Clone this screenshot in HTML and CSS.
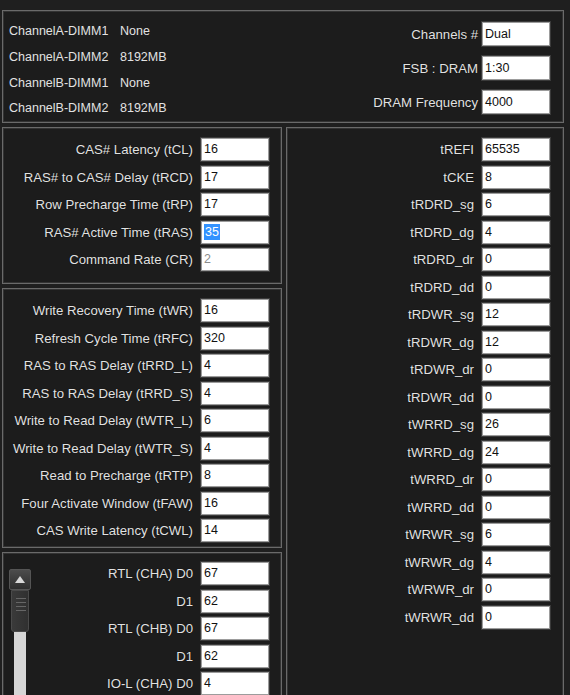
FILE: index.html
```html
<!DOCTYPE html>
<html lang="en">
<head>
  <meta charset="UTF-8">
  <title>Memory Timings</title>
  <link rel="stylesheet" href="styles.css">
</head>
<body>

<div class="app">

  <section class="panel top">
    <div class="dimms">
      <span>ChannelA-DIMM1</span><span>None</span>
      <span>ChannelA-DIMM2</span><span>8192MB</span>
      <span>ChannelB-DIMM1</span><span>None</span>
      <span>ChannelB-DIMM2</span><span>8192MB</span>
    </div>
    <div class="summary">
      <div class="field"><span>Channels #</span><span class="box big">Dual</span></div>
      <div class="field"><span>FSB : DRAM</span><span class="box big">1:30</span></div>
      <div class="field"><span>DRAM Frequency</span><span class="box big">4000</span></div>
    </div>
  </section>

  <div class="columns">
    <div class="left">

      <section class="panel primary">
        <div class="field"><span>CAS# Latency (tCL)</span><span class="box">16</span></div>
        <div class="field"><span>RAS# to CAS# Delay (tRCD)</span><span class="box">17</span></div>
        <div class="field"><span>Row Precharge Time (tRP)</span><span class="box">17</span></div>
        <div class="field"><span>RAS# Active Time (tRAS)</span><span class="box"><span class="sel">35</span></span></div>
        <div class="field"><span>Command Rate (CR)</span><span class="box off">2</span></div>
      </section>

      <section class="panel secondary">
        <div class="field"><span>Write Recovery Time (tWR)</span><span class="box">16</span></div>
        <div class="field"><span>Refresh Cycle Time (tRFC)</span><span class="box">320</span></div>
        <div class="field"><span>RAS to RAS Delay (tRRD_L)</span><span class="box">4</span></div>
        <div class="field"><span>RAS to RAS Delay (tRRD_S)</span><span class="box">4</span></div>
        <div class="field"><span>Write to Read Delay (tWTR_L)</span><span class="box">6</span></div>
        <div class="field"><span>Write to Read Delay (tWTR_S)</span><span class="box">4</span></div>
        <div class="field"><span>Read to Precharge (tRTP)</span><span class="box">8</span></div>
        <div class="field"><span>Four Activate Window (tFAW)</span><span class="box">16</span></div>
        <div class="field"><span>CAS Write Latency (tCWL)</span><span class="box">14</span></div>
      </section>

      <section class="panel rtl">
        <div class="scroll">
          <div class="arrow"></div>
          <div class="thumb"></div>
          <div class="track"></div>
        </div>
        <div class="rows">
          <div class="field"><span>RTL (CHA) D0</span><span class="box">67</span></div>
          <div class="field"><span>D1</span><span class="box">62</span></div>
          <div class="field"><span>RTL (CHB) D0</span><span class="box">67</span></div>
          <div class="field"><span>D1</span><span class="box">62</span></div>
          <div class="field"><span>IO-L (CHA) D0</span><span class="box">4</span></div>
        </div>
      </section>

    </div>

    <section class="panel sub">
      <div class="field"><span>tREFI</span><span class="box">65535</span></div>
      <div class="field"><span>tCKE</span><span class="box">8</span></div>
      <div class="field"><span>tRDRD_sg</span><span class="box">6</span></div>
      <div class="field"><span>tRDRD_dg</span><span class="box">4</span></div>
      <div class="field"><span>tRDRD_dr</span><span class="box">0</span></div>
      <div class="field"><span>tRDRD_dd</span><span class="box">0</span></div>
      <div class="field"><span>tRDWR_sg</span><span class="box">12</span></div>
      <div class="field"><span>tRDWR_dg</span><span class="box">12</span></div>
      <div class="field"><span>tRDWR_dr</span><span class="box">0</span></div>
      <div class="field"><span>tRDWR_dd</span><span class="box">0</span></div>
      <div class="field"><span>tWRRD_sg</span><span class="box">26</span></div>
      <div class="field"><span>tWRRD_dg</span><span class="box">24</span></div>
      <div class="field"><span>tWRRD_dr</span><span class="box">0</span></div>
      <div class="field"><span>tWRRD_dd</span><span class="box">0</span></div>
      <div class="field"><span>tWRWR_sg</span><span class="box">6</span></div>
      <div class="field"><span>tWRWR_dg</span><span class="box">4</span></div>
      <div class="field"><span>tWRWR_dr</span><span class="box">0</span></div>
      <div class="field"><span>tWRWR_dd</span><span class="box">0</span></div>
    </section>
  </div>

</div>

</body>
</html>
```

FILE: styles.css
```css
body {
  margin: 0;
  background: #1f1f1f;
  color: #e2e2e2;
  font-family: "Liberation Sans", Arial, sans-serif;
  font-size: 13.2px;
  overflow: hidden;
}
.app {
  height: 740px;
  box-sizing: border-box;
  padding: 10px 6px 0 2px;
  display: flex;
  flex-direction: column;
  gap: 4px;
}
.panel {
  box-sizing: border-box;
  border: 1px solid #6a6a6a;
  box-shadow: inset 0 0 0 1px #333;
  background: #1c1c1c;
}
.field {
  display: flex;
  align-items: center;
  justify-content: flex-end;
  gap: 8px;
  text-shadow: 0 0 1px #000;
}
.box {
  box-sizing: border-box;
  width: 68px;
  height: 23px;
  padding: 0 2px;
  background: #fff;
  border: 1px solid #9c9c9c;
  box-shadow: 0 0 0 1px #3a3a3a;
  color: #111;
  font-size: 12.5px;
  line-height: 21px;
  text-shadow: none;
}
.box.big {
  height: 24px;
  line-height: 22px;
}
.box.off {
  color: #8c8c8c;
}
.sel {
  background: #3392ff;
  color: #fff;
  padding: 1px 1px;
}

/* top summary */
.top {
  height: 113px;
  flex: none;
  display: flex;
  justify-content: space-between;
  padding: 0 13px 0 6px;
}
.dimms {
  display: grid;
  grid-template-columns: 111px auto;
  line-height: 24.3px;
  padding-top: 8px;
  font-size: 12.5px;
}
.summary {
  display: flex;
  flex-direction: column;
  gap: 10px;
  padding-top: 11px;
}
.summary .field {
  gap: 4px;
}

/* lower columns */
.columns {
  flex: 1;
  min-height: 0;
  display: flex;
  gap: 4px;
}
.left {
  width: 280px;
  flex: none;
  display: flex;
  flex-direction: column;
  gap: 4px;
}
.primary, .secondary, .sub, .rows {
  display: flex;
  flex-direction: column;
  gap: 4.5px;
}
.primary {
  height: 157px;
  padding: 10px 12px 0 0;
}
.secondary {
  height: 260px;
  padding: 10px 12px 0 0;
}
.rtl {
  flex: 1;
  display: flex;
  padding: 9px 12px 0 6px;
}
.rows {
  flex: 1;
}
.sub {
  flex: 1;
  padding: 10px 13px 0 0;
}

/* scrollbar */
.scroll {
  width: 22px;
  margin-top: 7px;
  display: flex;
  flex-direction: column;
  align-items: center;
}
.arrow {
  box-sizing: border-box;
  width: 22px;
  height: 21px;
  border: 1px solid #555;
  border-radius: 2px;
  background: linear-gradient(#4c4c4c, #2e2e2e);
  display: flex;
  align-items: center;
  justify-content: center;
}
.arrow::after {
  content: "";
  border-left: 5px solid transparent;
  border-right: 5px solid transparent;
  border-bottom: 7px solid #d8d8d8;
}
.thumb {
  box-sizing: border-box;
  width: 18px;
  height: 42px;
  border: 1px solid #4a4a4a;
  border-radius: 0 0 3px 3px;
  background:
    repeating-linear-gradient(#666 0 1px, transparent 1px 4px) 4px 7px / 10px 15px no-repeat,
    linear-gradient(90deg, #3a3a3a, #303030);
}
.track {
  flex: 1;
  width: 12px;
  background: #d6d6d6;
}
```
